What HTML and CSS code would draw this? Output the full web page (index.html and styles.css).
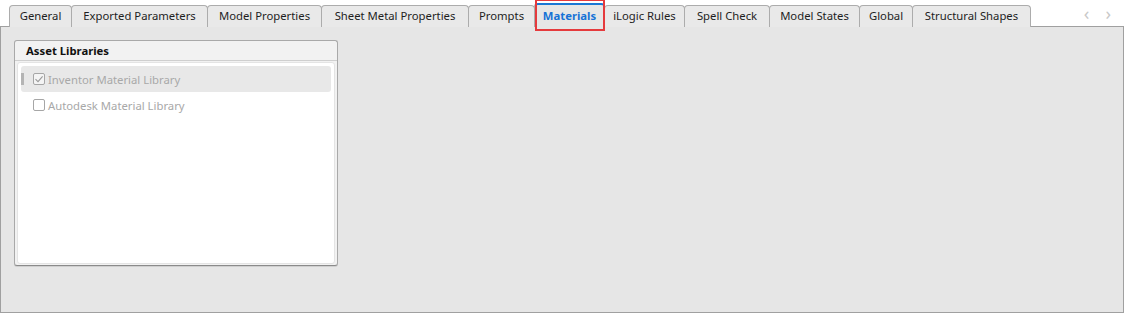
FILE: index.html
```html
<!DOCTYPE html>
<html lang="en">
<head>
    <meta charset="UTF-8">
    <title>Document Settings</title>
    <link rel="stylesheet" href="styles.css">
</head>
<body>
    <div class="tab-strip">
        <div class="tabs">
            <div class="tab w-general">General</div>
            <div class="tab w-exported">Exported Parameters</div>
            <div class="tab w-model">Model Properties</div>
            <div class="tab w-sheet">Sheet Metal Properties</div>
            <div class="tab w-prompts">Prompts</div>
            <div class="tab active w-materials">Materials</div>
            <div class="tab w-ilogic">iLogic Rules</div>
            <div class="tab w-spell">Spell Check</div>
            <div class="tab w-states">Model States</div>
            <div class="tab w-global">Global</div>
            <div class="tab w-shapes">Structural Shapes</div>
        </div>
        <div class="scroll-arrows">
            <span>&lsaquo;</span>
            <span>&rsaquo;</span>
        </div>
    </div>

    <div class="panel">
        <div class="group">
            <div class="group-header">Asset Libraries</div>
            <div class="list">
                <div class="row selected">
                    <span class="row-marker"></span>
                    <span class="check checked">
                        <svg width="10" height="10" viewBox="0 0 10 10"><path d="M1.5 5.2 L4 7.6 L8.6 2.4" fill="none" stroke="#9a9a9a" stroke-width="1.1"/></svg>
                    </span>
                    <span class="label">Inventor Material Library</span>
                </div>
                <div class="row">
                    <span class="row-marker blank"></span>
                    <span class="check"></span>
                    <span class="label">Autodesk Material Library</span>
                </div>
            </div>
        </div>
    </div>
</body>
</html>
```

FILE: styles.css
```css
/* Page */
body {
    margin: 0;
    background-color: #fff;
    font-family: "Segoe UI", "Noto Sans", "Open Sans", sans-serif;
    font-size: 11.3px;
    color: #1e1e1e;
    width: 1124px;
    height: 313px;
    display: flex;
    flex-direction: column;
}

/* Tab strip */
.tab-strip {
    height: 26px;
    display: flex;
    align-items: flex-end;
    padding-left: 9px;
    position: relative;
}

.tabs {
    display: flex;
    align-items: flex-end;
    margin-bottom: -1px;
}

.tab {
    box-sizing: border-box;
    height: 22px;
    background-color: #e9e9e9;
    border: 1px solid #acacac;
    border-bottom: none;
    border-radius: 4px 4px 0 0;
    margin-left: -1px;
    display: flex;
    justify-content: center;
    align-items: center;
    padding-bottom: 2px;
    white-space: nowrap;
}

.tab:first-child {
    margin-left: 0;
}

.tab.active {
    position: relative;
    height: 24px;
    background-color: #e6e6e6;
    border-top: 2px solid #1a77d4;
    color: #1672d6;
    font-weight: bold;
    z-index: 1;
}

/* red highlight round selected tab */
.tab.active::after {
    content: "";
    position: absolute;
    left: 0;
    right: -1px;
    top: -6px;
    bottom: -4px;
    border: 2px solid #e53a3d;
}

.w-general { width: 63px; }
.w-exported { width: 137px; }
.w-model { width: 115px; }
.w-sheet { width: 148px; }
.w-prompts { width: 67px; }
.w-materials { width: 71px; }
.w-ilogic { width: 81px; }
.w-spell { width: 86px; }
.w-states { width: 91px; }
.w-global { width: 54px; }
.w-shapes { width: 119px; }

.scroll-arrows {
    position: absolute;
    right: 13px;
    top: 3px;
    display: flex;
    gap: 16px;
    color: #c8c8c8;
    font-size: 18px;
    line-height: 20px;
}

/* Main panel */
.panel {
    flex: 1;
    background-color: #e6e6e6;
    border: 1px solid #a0a0a0;
    padding: 13px 13px;
}

/* Group box */
.group {
    width: 322px;
    height: 224px;
    border: 1px solid #a9a9a9;
    border-bottom-color: #8a8a8a;
    border-radius: 3px;
    background-color: #f2f2f2;
    display: flex;
    flex-direction: column;
    box-shadow: 0 1px 0 #cfcfcf;
}

.group-header {
    height: 19px;
    padding-left: 11px;
    font-weight: bold;
    line-height: 19px;
    color: #111;
    border-bottom: 1px solid #cfcfcf;
}

.list {
    flex: 1;
    background-color: #fff;
    margin: 1px 2px 1px 2px;
    border: 1px solid #e4e4e4;
    border-radius: 3px;
    padding: 3px 3px;
}

.row {
    height: 26px;
    display: flex;
    align-items: center;
    border-radius: 3px;
    color: #a8a8a8;
}

.row.selected {
    background-color: #e8e8e8;
}

.row-marker {
    width: 3px;
    height: 12px;
    background-color: #b4b4b4;
    margin-right: 9px;
}

.row-marker.blank {
    background-color: transparent;
}

.check {
    box-sizing: border-box;
    width: 12px;
    height: 12px;
    border: 1px solid #a6a6a6;
    border-radius: 2px;
    background-color: #fff;
    display: flex;
    justify-content: center;
    align-items: center;
    margin-right: 3px;
}

.check.checked {
    background-color: #f4f4f4;
}
```
